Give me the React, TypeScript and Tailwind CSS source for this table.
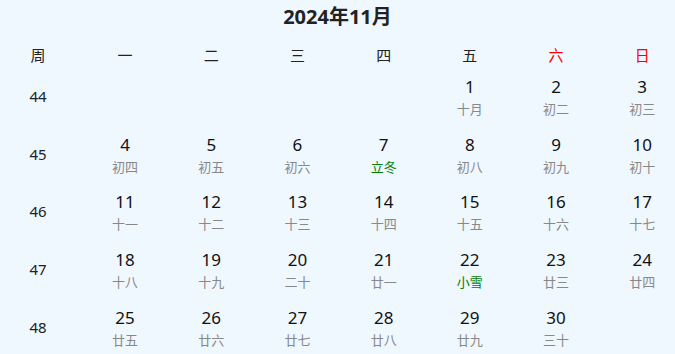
import React from 'react'

type Day = { d: number; lunar: string; term?: boolean } | null

const weekdays = ['一', '二', '三', '四', '五', '六', '日']

const weeks: { no: number; days: Day[] }[] = [
  {
    no: 44,
    days: [null, null, null, null, { d: 1, lunar: '十月' }, { d: 2, lunar: '初二' }, { d: 3, lunar: '初三' }],
  },
  {
    no: 45,
    days: [
      { d: 4, lunar: '初四' },
      { d: 5, lunar: '初五' },
      { d: 6, lunar: '初六' },
      { d: 7, lunar: '立冬', term: true },
      { d: 8, lunar: '初八' },
      { d: 9, lunar: '初九' },
      { d: 10, lunar: '初十' },
    ],
  },
  {
    no: 46,
    days: [
      { d: 11, lunar: '十一' },
      { d: 12, lunar: '十二' },
      { d: 13, lunar: '十三' },
      { d: 14, lunar: '十四' },
      { d: 15, lunar: '十五' },
      { d: 16, lunar: '十六' },
      { d: 17, lunar: '十七' },
    ],
  },
  {
    no: 47,
    days: [
      { d: 18, lunar: '十八' },
      { d: 19, lunar: '十九' },
      { d: 20, lunar: '二十' },
      { d: 21, lunar: '廿一' },
      { d: 22, lunar: '小雪', term: true },
      { d: 23, lunar: '廿三' },
      { d: 24, lunar: '廿四' },
    ],
  },
  {
    no: 48,
    days: [
      { d: 25, lunar: '廿五' },
      { d: 26, lunar: '廿六' },
      { d: 27, lunar: '廿七' },
      { d: 28, lunar: '廿八' },
      { d: 29, lunar: '廿九' },
      { d: 30, lunar: '三十' },
      null,
    ],
  },
]

export default function App() {
  return (
    <div
      className="w-[675px] h-[354px] overflow-hidden bg-[#eff7ff] text-[#222]"
      style={{ fontFamily: '"Noto Sans", "Noto Sans CJK SC", sans-serif' }}
    >
      <div className="h-[34px] flex items-center justify-center text-[20px] font-bold text-[#222]">
        2024年11月
      </div>

      <div className="grid grid-cols-[82px_repeat(7,86.2px)] h-[42px] items-center text-[15px]">
        <div className="pr-[6px] text-center">周</div>
        {weekdays.map((w, i) => (
          <div key={w} className={i >= 5 ? 'text-center text-[#ff0000]' : 'text-center'}>
            {w}
          </div>
        ))}
      </div>

      {weeks.map(week => (
        <div key={week.no} className="grid grid-cols-[82px_repeat(7,86.2px)] h-[57.7px]">
          <div className="pr-[6px] pt-[9px] text-center text-[15px] leading-[22px]">{week.no}</div>
          {week.days.map((day, i) => (
            <div key={i} className="flex flex-col items-center">
              {day && (
                <>
                  <span className="text-[17px] leading-[22px] text-[#111]">{day.d}</span>
                  <span
                    className={
                      day.term
                        ? 'text-[13px] leading-[22px] text-[#008000]'
                        : 'text-[13px] leading-[22px] text-[#888]'
                    }
                  >
                    {day.lunar}
                  </span>
                </>
              )}
            </div>
          ))}
        </div>
      ))}
    </div>
  )
}
